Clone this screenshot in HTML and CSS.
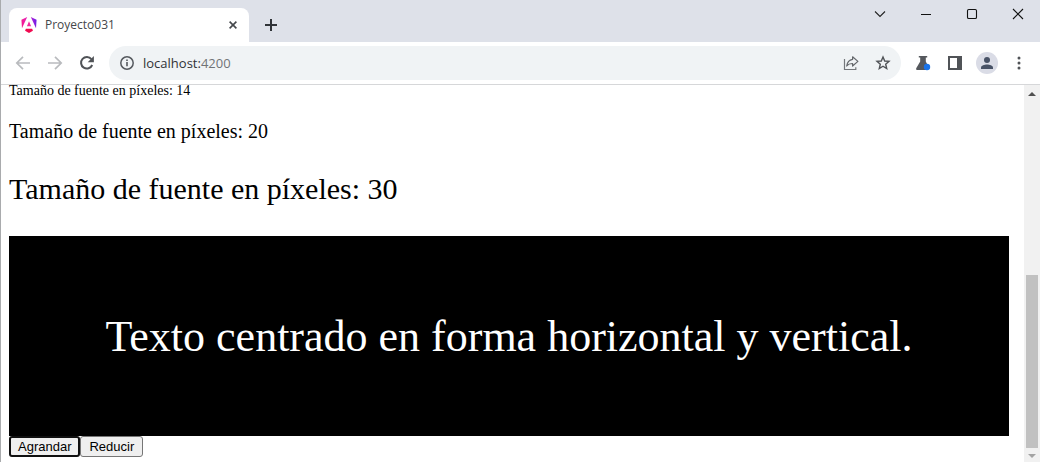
FILE: index.html
```html
<!DOCTYPE html>
<html lang="es">
<head>
<meta charset="utf-8">
<title>Proyecto031</title>
<link rel="stylesheet" href="styles.css">
</head>
<body>
<div class="window">
  <header class="tabstrip">
    <div class="tab">
      <svg class="logo" width="16" height="16" viewBox="0 0 24 24" aria-hidden="true">
        <defs><linearGradient id="shield" gradientUnits="userSpaceOnUse" x1="1" y1="10" x2="23" y2="7"><stop offset="0" stop-color="#f5188c"/><stop offset="0.5" stop-color="#e229c8"/><stop offset="1" stop-color="#6a1de8"/></linearGradient></defs>
        <path fill="url(#shield)" d="M14.692 0l7.832 16.855.814-12.856zM9.308 0 .662 3.999l.814 12.856z"/>
        <path fill="#f0289c" d="M8.903 13.93h6.198L12 6.396z"/>
        <path fill="#f00a50" d="M16.712 17.711H7.288l-1.204 2.916L12 24l5.916-3.373z"/>
      </svg>
      <span class="tab-title">Proyecto031</span>
      <button class="icon-button tab-close" aria-label="Cerrar pestaña"><svg width="8" height="8" viewBox="0 0 8 8"><path d="M0.6 0.6 7.4 7.4M7.4 0.6 0.6 7.4" stroke="#45484c" stroke-width="1.6"/></svg></button>
    </div>
    <button class="icon-button new-tab" aria-label="Nueva pestaña"><svg width="12" height="12" viewBox="0 0 12 12"><path d="M6 0v12M0 6h12" stroke="#303338" stroke-width="2"/></svg></button>
    <div class="window-controls">
      <button class="icon-button control" aria-label="Buscar pestañas"><svg width="12" height="12" viewBox="0 0 12 12"><path d="M1 3.5 6 8.5 11 3.5" fill="none" stroke="#222" stroke-width="1.1"/></svg></button>
      <button class="icon-button control" aria-label="Minimizar"><svg width="12" height="12" viewBox="0 0 12 12"><path d="M1 6.5h10" stroke="#111"/></svg></button>
      <button class="icon-button control" aria-label="Maximizar"><svg width="12" height="12" viewBox="0 0 12 12"><rect x="1.5" y="1.5" width="9" height="9" rx="1.3" fill="none" stroke="#111" stroke-width="1.1"/></svg></button>
      <button class="icon-button control" aria-label="Cerrar"><svg width="12" height="12" viewBox="0 0 12 12"><path d="M1 1 11 11M11 1 1 11" stroke="#111" stroke-width="1.1"/></svg></button>
    </div>
  </header>

  <nav class="toolbar">
    <button class="icon-button nav" aria-label="Atrás"><svg width="16" height="16" viewBox="0 0 16 16"><path d="M15 8H2M8 1.8 1.8 8 8 14.2" fill="none" stroke="#b9bbbe" stroke-width="1.7"/></svg></button>
    <button class="icon-button nav" aria-label="Adelante"><svg width="16" height="16" viewBox="0 0 16 16"><path d="M1 8h13M8 1.8 14.2 8 8 14.2" fill="none" stroke="#b9bbbe" stroke-width="1.7"/></svg></button>
    <button class="icon-button nav" aria-label="Recargar"><svg width="16" height="16" viewBox="0 0 16 16"><path d="M13.2 10A5.8 5.8 0 1 1 12.4 4.1" fill="none" stroke="#505357" stroke-width="2"/><path d="M14.9 1v6.2H8.7z" fill="#505357"/></svg></button>
    <div class="address">
      <svg width="14" height="14" viewBox="0 0 14 14" aria-hidden="true"><circle cx="7" cy="7" r="6.2" fill="none" stroke="#55595e" stroke-width="1.5"/><path d="M7 6v4.3M7 3.4v1.6" stroke="#55595e" stroke-width="1.6"/></svg>
      <a class="url" href="#pagina">localhost:<span class="port">4200</span></a>
      <button class="icon-button share" aria-label="Compartir"><svg width="16" height="16" viewBox="0 0 16 16"><path d="M1.5 4v10.5h11.3v-2.3" fill="none" stroke="#74777b" stroke-width="1.2"/><path d="M9.6 1.8 14.9 6.4 9.6 11V8.5C7 8.4 5.2 9.1 3.7 11 4.2 7.5 6 4.8 9.6 4.3z" fill="none" stroke="#64676b" stroke-width="1.2" stroke-linejoin="round"/></svg></button>
      <button class="icon-button" aria-label="Marcador"><svg width="16" height="16" viewBox="0 0 16 16"><path d="M8 2 9.7 6 14 6.4 10.7 9.2 11.7 13.5 8 11.2 4.3 13.5 5.3 9.2 2 6.4 6.3 6z" fill="none" stroke="#505357" stroke-width="1.4"/></svg></button>
    </div>
    <div class="actions">
      <button class="icon-button action" aria-label="Experimentos"><svg width="16" height="16" viewBox="0 0 16 16"><path d="M3.8 1h8.4v1.6h-1.4V6.4L13.8 12.6 13 15H2Q.6 15 1.2 13.2L5.2 6.4V2.6H3.8z" fill="#55585d"/><circle cx="12" cy="12" r="3.2" fill="#1a73e8"/></svg></button>
      <button class="icon-button action" aria-label="Panel lateral"><svg width="16" height="16" viewBox="0 0 16 16"><path fill="#505357" fill-rule="evenodd" d="M1 1h14v14H1zM3 3v10h7V3z"/></svg></button>
      <button class="icon-button action" aria-label="Perfil"><svg width="22" height="22" viewBox="0 0 22 22"><circle cx="11" cy="11" r="11" fill="#dadce6"/><circle cx="11" cy="8" r="3" fill="#485266"/><path d="M5 17v-1.6C5 13.4 8.5 12.4 11 12.4s6 1 6 3V17z" fill="#485266"/></svg></button>
      <button class="icon-button action" aria-label="Menú"><svg width="16" height="16" viewBox="0 0 16 16" fill="#505357"><circle cx="8" cy="3" r="1.5"/><circle cx="8" cy="8" r="1.5"/><circle cx="8" cy="13" r="1.5"/></svg></button>
    </div>
  </nav>

  <div class="viewport">
    <main class="page" id="pagina">
      <p class="size-14">Tamaño de fuente en píxeles: 14</p>
      <p class="size-20">Tamaño de fuente en píxeles: 20</p>
      <p class="size-30">Tamaño de fuente en píxeles: 30</p>
      <div class="box">Texto centrado en forma horizontal y vertical.</div>
      <div class="buttons"><button class="push focused">Agrandar</button><button class="push">Reducir</button></div>
    </main>
    <div class="scrollbar" aria-hidden="true">
      <svg width="8" height="4" viewBox="0 0 8 4"><path d="M0 4 4 0 8 4z" fill="#505050"/></svg>
      <div class="track"><div class="thumb"></div></div>
      <svg width="8" height="4" viewBox="0 0 8 4"><path d="M0 0 4 4 8 0z" fill="#a3a3a3"/></svg>
    </div>
  </div>
</div>
</body>
</html>
```
FILE: styles.css
```css
* { box-sizing: border-box; }
body { margin: 0; background: #fff; color: #000; font-family: "Liberation Serif", "Times New Roman", serif; }
.window { display: flex; flex-direction: column; height: 100vh; border-left: 1px solid #a9abad; overflow: hidden; }
.icon-button { display: flex; align-items: center; justify-content: center; padding: 0; border: 0; background: none; flex: none; }

.tabstrip { display: flex; flex: none; height: 42px; padding: 8px 0 0 8px; background: #dee1e9; }
.tab { display: flex; align-items: center; width: 240px; padding: 0 12px; border-radius: 8px 8px 0 0; background: #fff; }
.tab-title { flex: 1; margin-left: 8px; font: 12px/16px "Open Sans", "Noto Sans", sans-serif; color: #45474a; }
.tab-close { width: 8px; height: 16px; }
.new-tab { width: 28px; height: 34px; margin-left: 8px; }
.window-controls { display: flex; margin: -8px -1px 0 auto; }
.control { width: 46px; height: 28px; }

.toolbar { display: flex; align-items: center; flex: none; height: 43px; padding-left: 6px; border-bottom: 1px solid #d6d7d9; background: #fff; }
.nav { width: 32px; height: 32px; }
.address { display: flex; align-items: center; flex: 1; height: 34px; margin-left: 6px; padding: 0 10px 0 11px; border-radius: 17px; background: #f0f3f5; }
.url { flex: 1; margin-left: 9px; font: 13px/20px "Open Sans", "Noto Sans", sans-serif; color: #303236; text-decoration: none; }
.port { color: #707377; }
.share { margin-right: 16px; }
.actions { display: flex; margin: 0 5px 0 6px; }
.action { width: 32px; height: 32px; }

.viewport { display: flex; flex: 1; min-height: 0; }
.page { flex: 1; padding: 0 15px 0 8px; }
.page p { margin: 0; }
.size-14 { font-size: 14px; line-height: 12px; }
.page .size-20 { margin-top: 22px; font-size: 20px; line-height: 24px; }
.page .size-30 { margin: 28px 0 30px; font-size: 30px; line-height: 35px; }
.box { display: flex; align-items: center; justify-content: center; height: 200px; background: #000; color: #fff; font-size: 44px; }
.buttons { display: flex; }
.push { height: 21px; padding: 0 8px; border: 1px solid #767676; border-radius: 3px; background: #efefef; color: #000; font: 13px/16px "Liberation Sans", Arial, sans-serif; }
.focused { padding: 0 7px; border: 2px solid #101010; }
.scrollbar { display: flex; flex-direction: column; align-items: center; width: 16px; padding: 7px 0 4px; background: #f1f1f1; }
.track { display: flex; flex-direction: column; justify-content: flex-end; flex: 1; width: 12px; margin: 6px 0; }
.thumb { height: 50%; background: #c1c1c1; }
```
